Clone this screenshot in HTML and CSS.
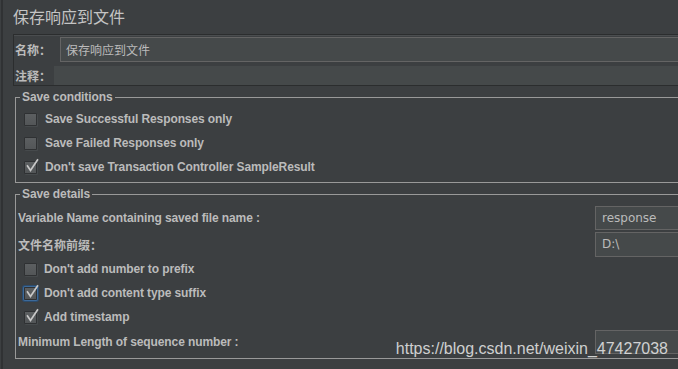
FILE: index.html
```html
<!DOCTYPE html>
<html lang="zh">
<head>
<meta charset="utf-8">
<link rel="stylesheet" href="styles.css">
</head>
<body>
<div class="frame">
  <h1 class="title">保存响应到文件</h1>
  <div class="name-panel">
    <div class="name-row">
      <span class="lbl cjk">名称：</span>
      <div class="field name-field">保存响应到文件</div>
    </div>
    <div class="comment-row">
      <span class="lbl cjk">注释：</span>
      <div class="comment-field"></div>
    </div>
  </div>

  <fieldset class="group conditions">
    <legend>Save conditions</legend>
    <label class="cb-row"><span class="cb"></span><span class="cb-text">Save Successful Responses only</span></label>
    <label class="cb-row"><span class="cb"></span><span class="cb-text">Save Failed Responses only</span></label>
    <label class="cb-row"><span class="cb checked"><svg viewBox="0 0 14 14" width="14" height="14"><polyline points="2.5,7 5.5,11.5 12.5,1" /></svg></span><span class="cb-text">Don't save Transaction Controller SampleResult</span></label>
  </fieldset>

  <fieldset class="group details">
    <legend>Save details</legend>
    <div class="kv-row">
      <span class="lbl">Variable Name containing saved file name :</span>
      <div class="field kv-field">response</div>
    </div>
    <div class="kv-row second">
      <span class="lbl cjk">文件名称前缀：</span>
      <div class="field kv-field">D:\</div>
    </div>
    <label class="cb-row tight"><span class="cb"></span><span class="cb-text">Don't add number to prefix</span></label>
    <label class="cb-row tight"><span class="cb checked focused"><svg viewBox="0 0 14 14" width="14" height="14"><polyline points="2.5,7 5.5,11.5 12.5,1" /></svg></span><span class="cb-text">Don't add content type suffix</span></label>
    <label class="cb-row tight"><span class="cb checked"><svg viewBox="0 0 14 14" width="14" height="14"><polyline points="2.5,7 5.5,11.5 12.5,1" /></svg></span><span class="cb-text">Add timestamp</span></label>
    <div class="kv-row last">
      <span class="lbl">Minimum Length of sequence number :</span>
      <div class="field kv-field"></div>
    </div>
  </fieldset>
</div>
<div class="watermark">https://blog.csdn.net/weixin_47427038</div>
</body>
</html>
```

FILE: styles.css
```css
html, body {
  margin: 0;
  padding: 0;
  background: #3c3f41;
  overflow: hidden;
  width: 678px;
  height: 369px;
}

body {
  position: relative;
  font-family: "Liberation Sans", Arial, "Noto Sans CJK SC", sans-serif;
  font-size: 12px;
  letter-spacing: -0.1px;
  color: #bbbbbb;
  box-shadow: inset 1px 0 0 #3c3f41, inset 3px 0 0 #303234;
}

.frame {
  width: 720px;
  padding: 0 0 0 13px;
  box-sizing: border-box;
}

.title {
  margin: 0;
  height: 34px;
  padding-top: 5px;
  box-sizing: border-box;
  font-family: "Noto Sans CJK SC", sans-serif;
  font-weight: normal;
  font-size: 16px;
  line-height: 22px;
  letter-spacing: 0;
  color: #c4c4c4;
}

.cjk {
  font-family: "Noto Sans CJK SC", sans-serif;
  letter-spacing: 0;
}

.name-panel {
  border: 1px solid #2b2d2e;
  border-right: none;
  box-shadow: inset 0 1px 0 #4a4d4f;
  padding: 2px 0 0 1px;
  height: 52px;
  box-sizing: border-box;
}

.lbl {
  font-weight: bold;
  white-space: nowrap;
  color: #bbbbbb;
}

.name-row {
  display: flex;
  align-items: center;
  height: 25px;
}

.name-row .lbl {
  width: 45px;
  line-height: 24px;
}

.field {
  background: #45494a;
  border: 1px solid #646464;
  box-sizing: border-box;
  color: #bbbbbb;
  font-weight: normal;
  white-space: nowrap;
  overflow: hidden;
}

.name-field {
  flex: 1;
  height: 25px;
  line-height: 23px;
  padding-left: 5px;
  font-family: "Noto Sans CJK SC", sans-serif;
  font-size: 12px;
  letter-spacing: 0;
}

.comment-row {
  display: flex;
  align-items: center;
  margin-top: 4px;
  height: 19px;
}

.comment-row .lbl {
  width: 39px;
}

.comment-field {
  flex: 1;
  height: 19px;
  background: #45494a;
}

.group {
  margin: 4px 0 0 2px;
  padding: 0 0 0 2px;
  border: 1px solid #999999;
  border-right: none;
  min-width: 0;
}

.group legend {
  margin-left: 2px;
  padding: 0 2px;
  font-weight: bold;
  font-size: 12px;
  line-height: 14px;
  color: #bbbbbb;
}

.conditions {
  padding-top: 3px;
  padding-bottom: 3px;
}

.details {
  margin-top: 4px;
  padding-top: 5px;
  padding-bottom: 4px;
}

.cb-row {
  display: flex;
  align-items: center;
  height: 24px;
  padding-left: 6px;
  gap: 8px;
  font-weight: bold;
}

.cb-row.tight {
  gap: 7px;
}

.cb {
  position: relative;
  width: 13px;
  height: 13px;
  box-sizing: border-box;
  border: 1px solid #2f3133;
  border-radius: 1px;
  background: linear-gradient(#5c5f61, #535658);
  box-shadow: 1px 1px 0 #464a4c;
  flex: none;
}

.cb svg {
  position: absolute;
  left: 0;
  top: -3px;
  overflow: visible;
}

.cb svg polyline {
  fill: none;
  stroke: #c8c8c8;
  stroke-width: 1.7;
  stroke-linecap: square;
  stroke-linejoin: miter;
}

.cb.focused {
  border-color: #2f3133;
  box-shadow: 0 0 0 1px #3d6a99, 0 0 0 2px #2c4b6c;
}

.cb-text {
  white-space: nowrap;
}

.kv-row {
  display: flex;
  align-items: center;
  justify-content: space-between;
  height: 24px;
}

.kv-row.second {
  margin-top: 2px;
  height: 25px;
}

.kv-row.last {
  margin-top: 1px;
}

.kv-field {
  width: 125px;
  height: 100%;
  padding-left: 6px;
  line-height: 22px;
  font-size: 12px;
  letter-spacing: 0;
  font-family: "DejaVu Sans", sans-serif;
}

.watermark {
  position: absolute;
  right: 10px;
  top: 339px;
  font-family: "Liberation Sans", Arial, sans-serif;
  font-size: 16px;
  line-height: 20px;
  letter-spacing: 0;
  color: rgba(235, 235, 235, 0.85);
  white-space: nowrap;
}
```
